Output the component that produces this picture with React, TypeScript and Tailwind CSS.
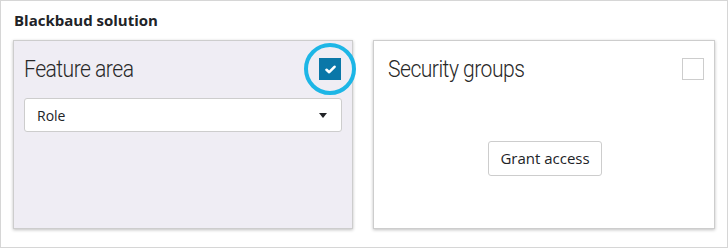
export default function App() {
  return (
    <div className="w-[728px] h-[248px] border border-[#d6d6d6] bg-white px-3 pt-[9px] font-['Open_Sans',sans-serif] text-[#212327]">
      <h2 className="text-[15px] font-bold leading-5 pl-px">Blackbaud solution</h2>

      <div className="mt-[10px] grid grid-cols-[340px_342px] gap-5">
        {/* Feature area card */}
        <div className="h-[189px] border border-[#cdcdcd] bg-[#efedf4] shadow-[0_1px_3px_rgba(0,0,0,0.25)] px-[10px] pt-[14px]">
          <div className="flex h-7 items-center justify-between">
            <span className="font-['Roboto',sans-serif] font-light text-[24px] leading-7 tracking-[-0.6px] origin-left scale-x-[0.88] inline-block text-[#282828]">
              Feature area
            </span>
            <div className="relative mr-px h-[22px] w-[22px]">
              <div className="flex h-[22px] w-[22px] items-center justify-center bg-[#0a77a8]">
                <svg width="11" height="9" viewBox="0 0 11 9">
                  <path d="M1.5 4.8 L4.2 7.2 L9.5 1.8" fill="none" stroke="white" strokeWidth="2.6" strokeLinecap="round" strokeLinejoin="round" />
                </svg>
              </div>
              <div className="absolute left-1/2 top-1/2 h-[52px] w-[52px] -translate-x-1/2 -translate-y-1/2 rounded-full border-4 border-[#1db6e6]" />
            </div>
          </div>
          <div className="mt-[15px] flex h-[34px] items-center justify-between rounded-[3px] border border-[#cdcdcd] bg-white pl-3 pr-[14px] text-[14px]">
            <span>Role</span>
            <svg width="8" height="5" viewBox="0 0 8 5">
              <path d="M0 0 H8 L4 5 Z" fill="#212327" />
            </svg>
          </div>
        </div>

        {/* Security groups card */}
        <div className="h-[189px] border border-[#cdcdcd] bg-white shadow-[0_1px_3px_rgba(0,0,0,0.25)] pl-[14px] pr-[10px] pt-[14px]">
          <div className="flex h-7 items-center justify-between">
            <span className="font-['Roboto',sans-serif] font-light text-[24px] leading-7 tracking-[-0.6px] origin-left scale-x-[0.88] inline-block text-[#282828]">
              Security groups
            </span>
            <div className="h-[22px] w-[22px] border border-[#cdcdcd] bg-white" />
          </div>
          <div className="mt-[58px] flex justify-center pr-[2px]">
            <button className="h-[35px] w-[114px] rounded-[3px] border border-[#cdcdcd] bg-white text-[15px] text-[#212327]">
              Grant access
            </button>
          </div>
        </div>
      </div>
    </div>
  );
}
